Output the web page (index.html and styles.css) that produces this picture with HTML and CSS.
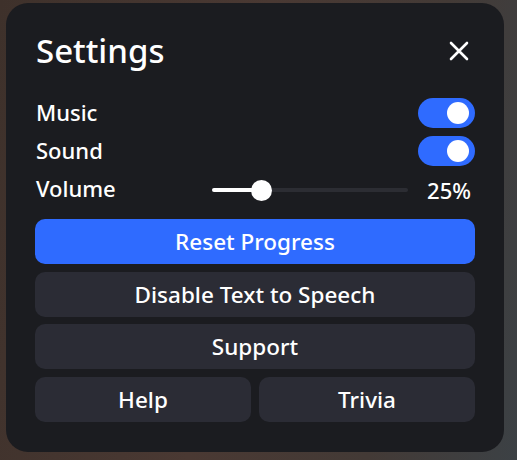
FILE: index.html
```html
<!DOCTYPE html>
<html>
<head>
<meta charset="utf-8">
<link rel="stylesheet" href="styles.css">
</head>
<body>
<div class="panel">
  <div class="header">
    <h1 class="title">Settings</h1>
    <button class="close" aria-label="Close">
      <svg width="20" height="20" viewBox="0 0 20 20"><path d="M2 2 L18 18 M18 2 L2 18" stroke="#fff" stroke-width="2.6" stroke-linecap="round"/></svg>
    </button>
  </div>
  <div class="rows">
    <div class="row"><span class="label">Music</span><span class="toggle"><span class="knob"></span></span></div>
    <div class="row"><span class="label">Sound</span><span class="toggle"><span class="knob"></span></span></div>
    <div class="row">
      <span class="label">Volume</span>
      <div class="vol">
        <div class="slider"><div class="fill" style="width:25%"></div><div class="thumb" style="left:25%"></div></div>
        <span class="pct">25%</span>
      </div>
    </div>
  </div>
  <div class="buttons">
    <button class="btn primary">Reset Progress</button>
    <button class="btn">Disable Text to Speech</button>
    <button class="btn">Support</button>
    <div class="pair">
      <button class="btn">Help</button>
      <button class="btn">Trivia</button>
    </div>
  </div>
</div>
</body>
</html>
```
FILE: styles.css
```css
html, body { margin: 0; padding: 0; }
body {
  width: 517px;
  height: 460px;
  overflow: hidden;
  background: linear-gradient(100deg, #3e312b 0%, #4a3933 45%, #433a36 75%, #3c4145 100%);
  font-family: "Noto Sans", "Open Sans", sans-serif;
  color: #fff;
}
.panel {
  box-sizing: border-box;
  margin: 3px 0 0 6px;
  width: 498px;
  height: 449px;
  background: #1b1c20;
  border-radius: 22px;
  padding: 24px 29px 0 29px;
  display: flex;
  flex-direction: column;
}
.header {
  height: 48px;
  display: flex;
  align-items: center;
  justify-content: space-between;
  padding-left: 1px;
}
.title {
  margin: 0;
  font-size: 33px;
  font-weight: 500;
  line-height: 48px;
}
.close {
  background: none;
  border: 0;
  padding: 0;
  width: 20px;
  height: 20px;
  margin-right: 6px;
  display: flex;
}
.rows {
  margin-top: 22px;
  display: flex;
  flex-direction: column;
  gap: 7px;
}
.row {
  height: 31px;
  display: flex;
  align-items: center;
  justify-content: space-between;
  padding-left: 1px;
}
.label {
  font-size: 22px;
  font-weight: 500;
  line-height: 31px;
}
.toggle {
  width: 57px;
  height: 30px;
  border-radius: 15px;
  background: #2f6bff;
  display: flex;
  align-items: center;
  justify-content: flex-end;
  padding-right: 6px;
  box-sizing: border-box;
}
.knob {
  width: 22px;
  height: 22px;
  border-radius: 50%;
  background: #fff;
}
.vol {
  display: flex;
  align-items: center;
  gap: 13px;
  margin-top: 3px;
}
.slider {
  position: relative;
  width: 196px;
  height: 4px;
  border-radius: 2px;
  background: #2c2d33;
}
.fill {
  height: 4px;
  border-radius: 2px;
  background: #fff;
}
.thumb {
  position: absolute;
  top: 50%;
  width: 21px;
  height: 21px;
  margin: -10.5px 0 0 -10.5px;
  border-radius: 50%;
  background: #fff;
}
.pct {
  font-size: 22px;
  font-weight: 500;
  width: 50px;
  text-align: right;
  margin-right: 4px;
}
.buttons {
  margin-top: 15px;
  display: flex;
  flex-direction: column;
  gap: 7.5px;
}
.btn {
  height: 45px;
  border: 0;
  border-radius: 10px;
  background: #2b2c35;
  color: #fff;
  font-family: "Noto Sans", "Open Sans", sans-serif;
  font-size: 22.5px;
  font-weight: 500;
  padding: 0;
}
.btn.primary { background: #2f6bff; }
.pair {
  display: grid;
  grid-template-columns: 1fr 1fr;
  gap: 8px;
}
```
